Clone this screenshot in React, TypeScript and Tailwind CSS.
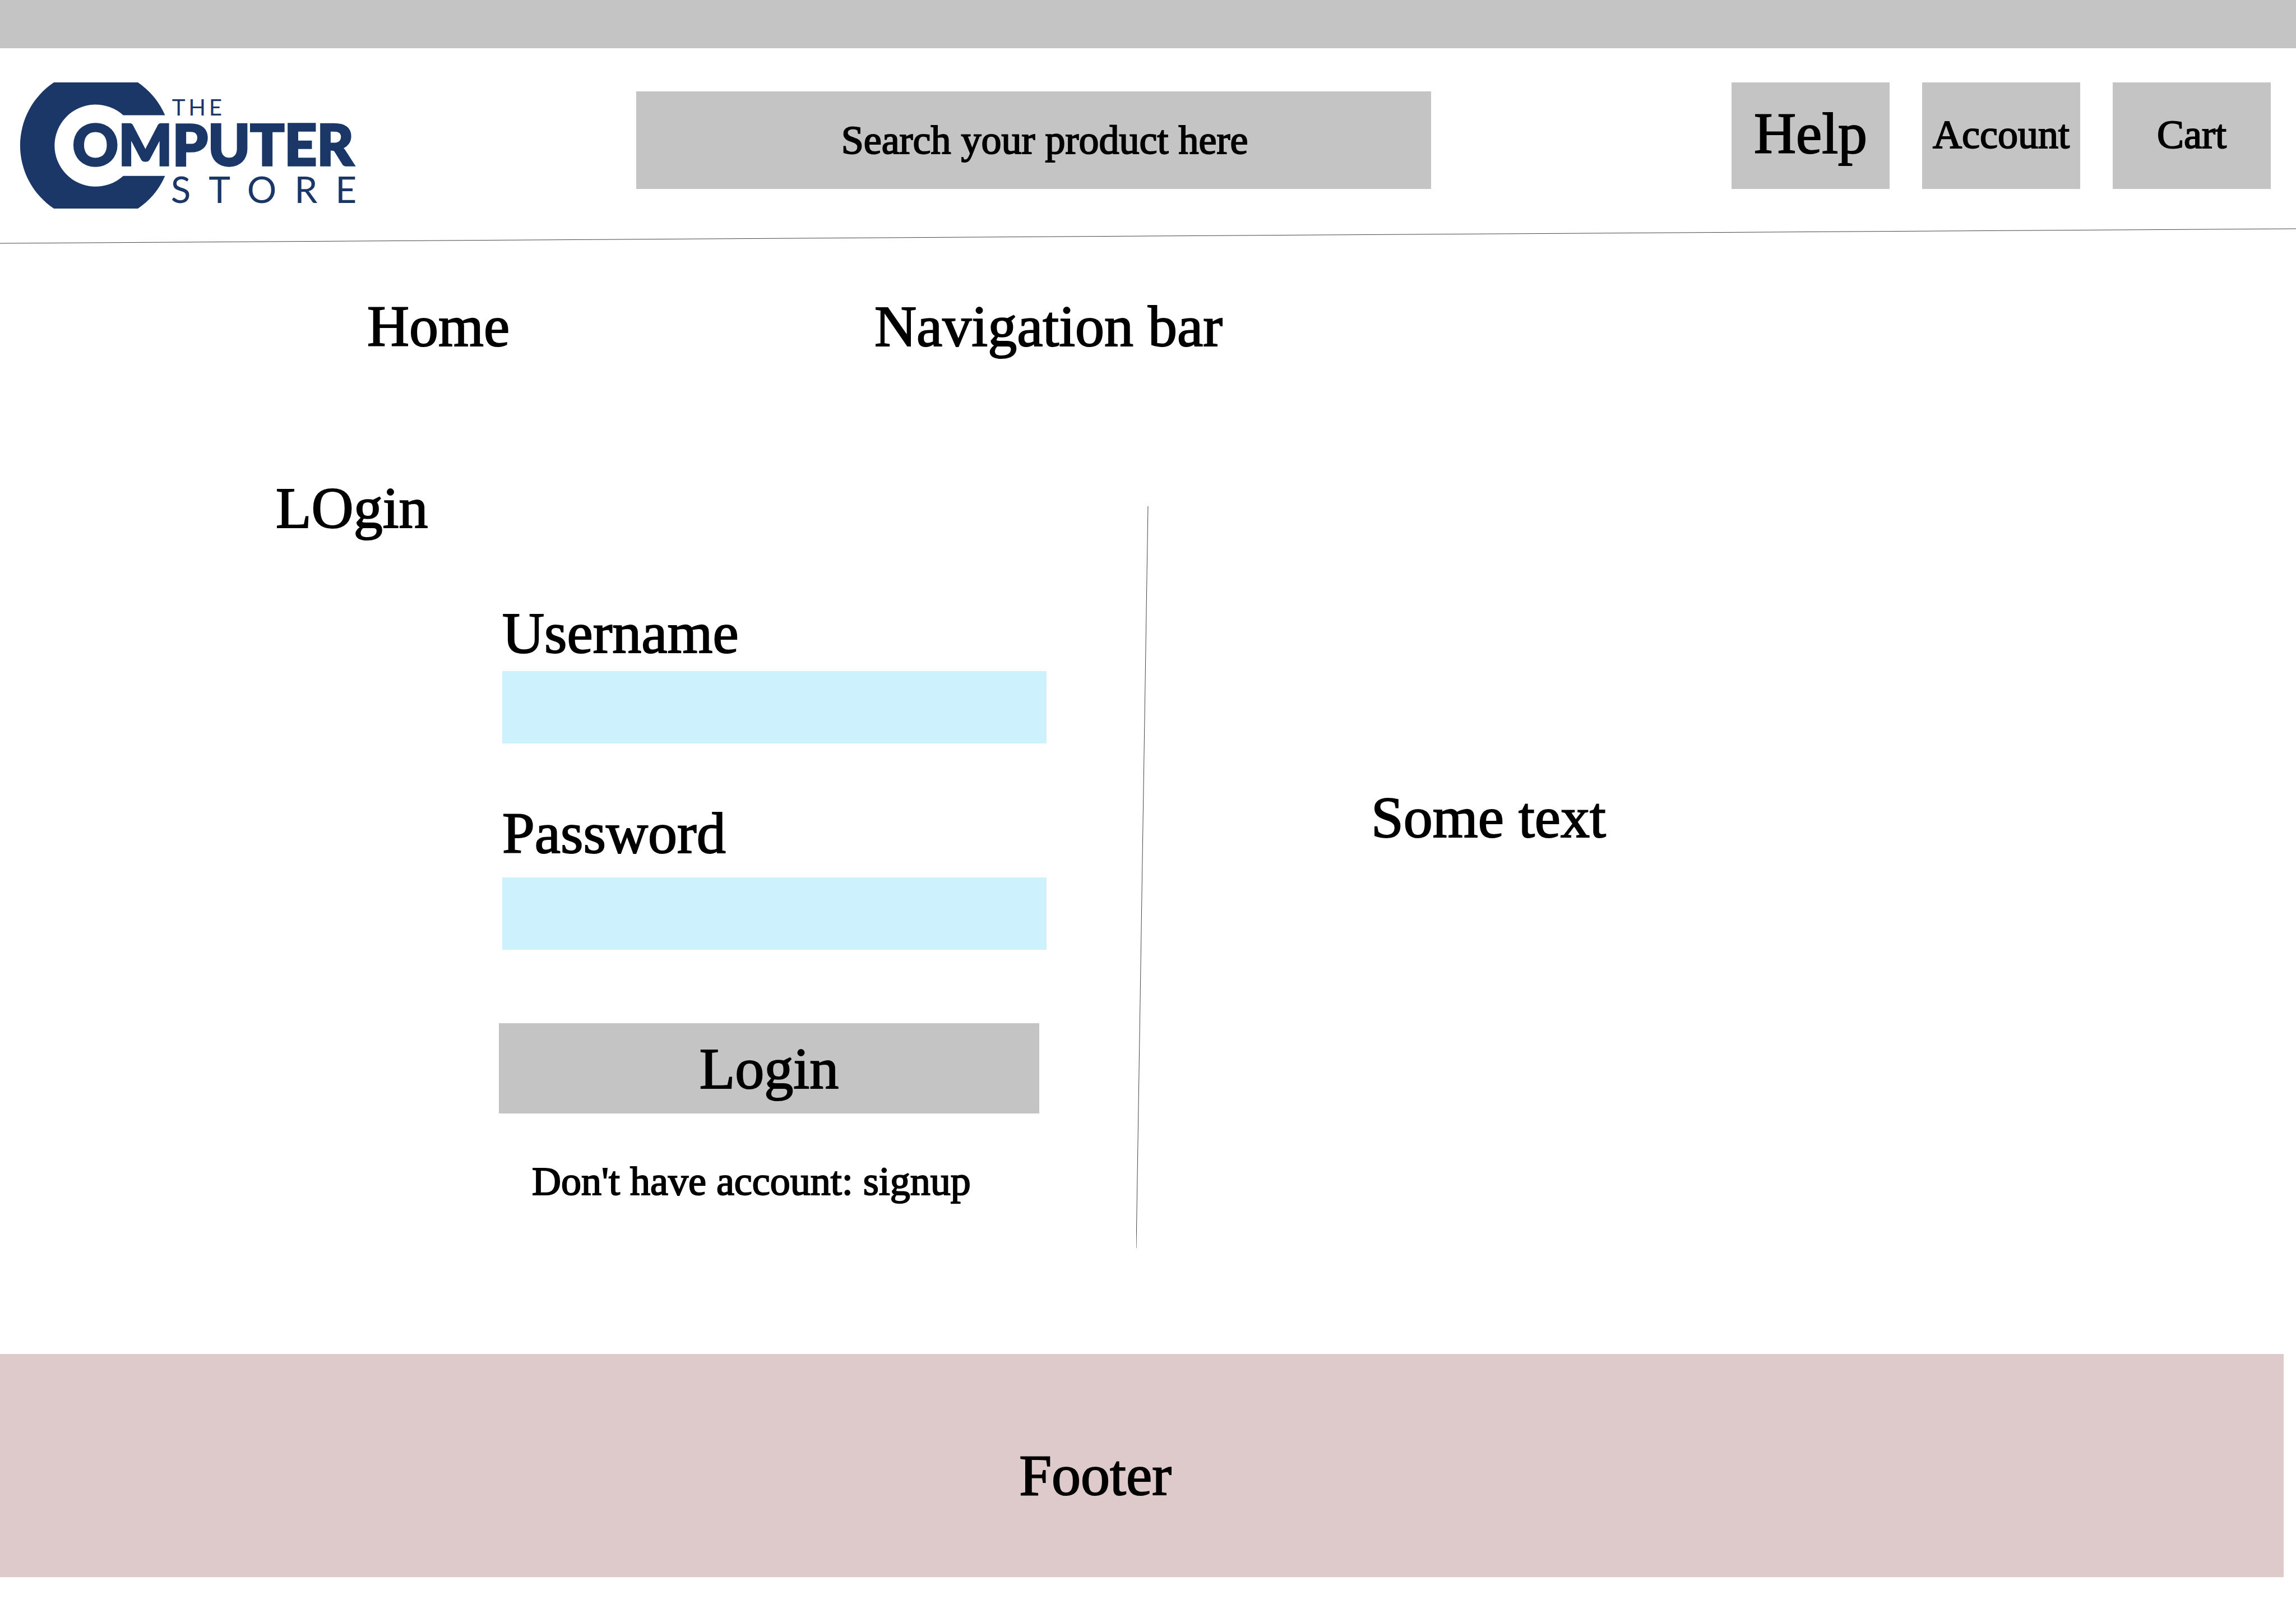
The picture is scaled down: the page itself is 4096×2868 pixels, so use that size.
import React from "react";

function Logo() {
  return (
    <svg
      viewBox="51 208 850 318"
      className="h-[225px] w-[601px] overflow-visible"
      role="img"
      aria-label="The Computer Store"
      fill="#1b3768"
      fontFamily="Lato, sans-serif"
    >
      <path d="M136 208H348A191 191 0 0 1 416.500 290.700H311A103.500 103.500 0 1 0 311 443.700H416.500A191 191 0 0 1 348 526H136A191 191 0 0 1 136 208Z" />
      <text x="434" y="292" fontSize="57" letterSpacing="8">THE</text>
      <text x="183" y="417" fontSize="143" fontWeight="900" stroke="#1b3768" strokeWidth="5">OMPUTER</text>
      <text x="431" y="512" fontSize="93" letterSpacing="45">STORE</text>
    </svg>
  );
}

function Header() {
  return (
    <header>
      <div className="h-[86px] bg-[#c4c4c4]" />
      <div className="grid grid-cols-[1135fr_1418fr_1543fr] pt-[61px]">
        <a href="#home" className="ml-9 block">
          <Logo />
        </a>
        <input
          type="search"
          aria-label="Search"
          placeholder="Search your product here"
          className="mt-4 h-[174px] w-full bg-[#c4c4c4] pl-16 text-center text-[72px] text-black outline-none placeholder:text-black placeholder:opacity-100"
        />
        <div className="flex justify-end gap-[58px] pr-[45px]">
          <button type="button" className="h-[190px] w-[282px] bg-[#c4c4c4] pb-2 text-[104px] leading-[104px]">
            Help
          </button>
          <button type="button" className="h-[190px] w-[282px] bg-[#c4c4c4] pb-1 text-[72px] leading-[72px]">
            Account
          </button>
          <button type="button" className="h-[190px] w-[282px] bg-[#c4c4c4] pb-1 text-[72px] leading-[72px]">
            Cart
          </button>
        </div>
      </div>
      <svg viewBox="0 0 4096 28" preserveAspectRatio="none" className="mt-[35px] h-7 w-full" aria-hidden="true">
        <line x1="0" y1="27" x2="4096" y2="1" stroke="#444444" strokeWidth="1" />
      </svg>
    </header>
  );
}

function LoginForm() {
  return (
    <form className="ml-[896px] flex flex-col items-start pt-[119px]" onSubmit={(e) => e.preventDefault()}>
      <label htmlFor="username">Username</label>
      <input id="username" type="text" className="mt-4 h-[129px] w-[971px] bg-[#cdf1fd] px-6 outline-none" />
      <label htmlFor="password" className="mt-[108px]">
        Password
      </label>
      <input id="password" type="password" className="mt-[27px] h-[129px] w-[971px] bg-[#cdf1fd] px-6 outline-none" />
      <button type="submit" className="-ml-1.5 mt-[131px] h-[161px] w-[964px] bg-[#c4c4c4]">
        Login
      </button>
      <p className="ml-[53px] mt-[85px] text-[72px] leading-[72px]">
        Don't have account: <a href="#signup">signup</a>
      </p>
    </form>
  );
}

export default function App() {
  return (
    <div className="bg-white pb-[55px] font-['Liberation_Serif',serif] text-[104px] leading-[104px] text-black [-webkit-text-stroke:2px_black]">
      <Header />
      <nav className="grid grid-cols-[655fr_905fr_2536fr] pt-[95px]">
        <a href="#home" className="col-start-2">
          Home
        </a>
        <a href="#navigation">Navigation bar</a>
      </nav>
      <main className="grid grid-cols-[2027fr_22px_2047fr] pt-[220px]">
        <section>
          <h1 className="pl-[492px]">LOgin</h1>
          <LoginForm />
        </section>
        <svg viewBox="0 0 22 1323" preserveAspectRatio="none" className="mt-[49px] h-[1323px] w-full" aria-hidden="true">
          <line x1="21" y1="0" x2="0" y2="1323" stroke="#444444" strokeWidth="1" />
        </svg>
        <section className="pl-[397px] pt-[552px]">
          <p>Some text</p>
        </section>
      </main>
      <footer className="mr-[22px] mt-[189px] bg-[#decaca] pb-[130px] pr-[166px] pt-[164px] text-center">Footer</footer>
    </div>
  );
}
